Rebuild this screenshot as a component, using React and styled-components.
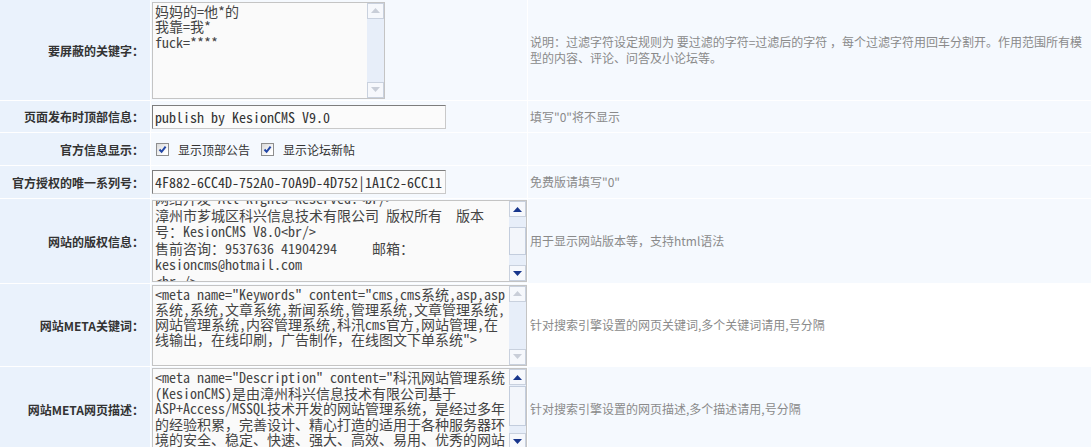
import React, { useLayoutEffect, useRef } from "react";
import styled, { createGlobalStyle } from "styled-components";

const GlobalStyle = createGlobalStyle`
  html, body {
    margin: 0;
    padding: 0;
    background: #fff;
    overflow: hidden;
  }
  body {
    font-family: "Noto Sans CJK SC", "Liberation Sans", sans-serif;
    font-size: 12px;
    color: #333;
  }
`;

const MONO = `"Noto Sans Mono CJK SC", "Noto Sans CJK SC", monospace`;

const Table = styled.div`
  display: grid;
  grid-template-columns: 150px 376px 1fr;
  grid-template-rows: 100px 31px 32px 32px 84px 82px 84px;
  gap: 1px;
  width: 1091px;
  background: #fff;
`;

const Label = styled.div`
  background: #eaf2fc;
  display: flex;
  align-items: center;
  justify-content: flex-end;
  padding-right: 6px;
  font-weight: bold;
  color: #333;
  white-space: nowrap;
`;

const Field = styled.div`
  background: #f5f9fe;
  display: flex;
  align-items: center;
  padding-left: ${(p) => p.$indent || 1}px;
  gap: 9px;
  overflow: hidden;
`;

const Note = styled.div`
  background: ${(p) => (p.$plain ? "#fff" : "#f5f9fe")};
  display: flex;
  align-items: center;
  padding-left: 2px;
  color: #8a8a8a;
  line-height: 16px;
`;

const NoteText = styled.p`
  margin: 0;
`;

const Input = styled.input`
  width: 294px;
  height: 24px;
  box-sizing: border-box;
  margin: 0;
  padding: 0 2px;
  border: 1px solid;
  border-color: #7d7d7d #c9c9c9 #c9c9c9 #7d7d7d;
  background: #fbfbfb;
  font-family: ${MONO};
  font-size: 14px;
  color: #333;
  outline: none;
`;

const Box = styled.div`
  display: flex;
  width: ${(p) => p.$w}px;
  height: ${(p) => p.$h}px;
  box-sizing: border-box;
  border: 1px solid #c4c4c4;
  background: #fafafa;
`;

const Area = styled.textarea`
  flex: 1;
  margin: 0;
  padding: 1px 2px;
  border: none;
  background: transparent;
  resize: none;
  overflow: hidden;
  white-space: pre;
  font-family: ${MONO};
  font-size: 14px;
  line-height: ${(p) => p.$lh}px;
  color: #444;
  outline: none;
`;

const Scrollbar = styled.div`
  width: 17px;
  display: flex;
  flex-direction: column;
  background: #e7eef9;
`;

const ScrollButton = styled.div`
  height: 16px;
  box-sizing: border-box;
  border: 1px solid #c9d1de;
  background: #f6f8fc;
  display: flex;
  align-items: center;
  justify-content: center;
`;

const Track = styled.div`
  flex: ${(p) => p.$grow};
`;

const Thumb = styled.div`
  height: ${(p) => p.$size}px;
  box-sizing: border-box;
  border: 1px solid #c3cddd;
  background: #f3f6fb;
`;

const Check = styled.span`
  width: 13px;
  height: 13px;
  box-sizing: border-box;
  border: 1px solid #8e8e8e;
  background: linear-gradient(135deg, #d9d9d9, #ffffff 80%);
  display: inline-flex;
  align-items: center;
  justify-content: center;
  flex-shrink: 0;
`;

const CheckLabel = styled.span`
  color: #333;
  font-size: 12px;
  margin-right: 2px;
`;

function Arrow({ down, active }) {
  return (
    <svg width="9" height="5" viewBox="0 0 9 5">
      <path
        d={down ? "M0 0 L9 0 L4.5 5 Z" : "M0 5 L4.5 0 L9 5 Z"}
        fill={active ? "#17358c" : "#c9ced8"}
      />
    </svg>
  );
}

function TextBox({ w, h, lh, lines, scroll = 0, active, thumb }) {
  const ref = useRef(null);
  useLayoutEffect(() => {
    if (ref.current) ref.current.scrollTop = scroll;
  }, [scroll]);
  return (
    <Box $w={w} $h={h}>
      <Area ref={ref} $lh={lh} readOnly value={lines.join("\n")} />
      <Scrollbar>
        <ScrollButton>
          <Arrow active={active} />
        </ScrollButton>
        {active ? (
          <>
            <Track $grow={thumb[0]} />
            <Thumb $size={thumb[1]} />
            <Track $grow={thumb[2]} />
          </>
        ) : (
          <Track $grow={1} />
        )}
        <ScrollButton>
          <Arrow down active={active} />
        </ScrollButton>
      </Scrollbar>
    </Box>
  );
}

function CheckBox({ children }) {
  return (
    <>
      <Check>
        <svg width="9" height="9" viewBox="0 0 9 9">
          <path d="M1.5 4.5 L3.6 6.8 L7.6 1.6" fill="none" stroke="#2347a6" strokeWidth="2" />
        </svg>
      </Check>
      <CheckLabel>{children}</CheckLabel>
    </>
  );
}

const keywords = ["妈妈的=他*的", "我靠=我*", "fuck=****"];

const copyright = [
  "Copyright © 2006-2012 www.kesion.com",
  "科兴信息技术有限公司 科汛",
  "网络开发 All Rights Reserved.<br/>",
  "漳州市芗城区科兴信息技术有限公司 版权所有  版本",
  "号：KesionCMS V8.0<br/>",
  "售前咨询：9537636 41904294     邮箱：",
  "kesioncms@hotmail.com",
  "<br />",
];

const metaKeywords = [
  '<meta name="Keywords" content="cms,cms系统,asp,asp',
  "系统,系统,文章系统,新闻系统,管理系统,文章管理系统,",
  "网站管理系统,内容管理系统,科汛cms官方,网站管理,在",
  '线输出，在线印刷，广告制作，在线图文下单系统">',
];

const metaDesc = [
  '<meta name="Description" content="科汛网站管理系统',
  "(KesionCMS)是由漳州科兴信息技术有限公司基于",
  "ASP+Access/MSSQL技术开发的网站管理系统，是经过多年",
  "的经验积累，完善设计、精心打造的适用于各种服务器环",
  "境的安全、稳定、快速、强大、高效、易用、优秀的网站",
  "建设解决方案。\">",
];

export default function App() {
  return (
    <>
      <GlobalStyle />
      <Table>
        <Label>要屏蔽的关键字：</Label>
        <Field>
          <TextBox w={233} h={97} lh={15.5} lines={keywords} />
        </Field>
        <Note>
          <NoteText>
            说明：过滤字符设定规则为 要过滤的字符=过滤后的字符 ，每个过滤字符用回车分割开。作用范围所有模
            <br />
            型的内容、评论、问答及小论坛等。
          </NoteText>
        </Note>

        <Label>页面发布时顶部信息：</Label>
        <Field>
          <Input readOnly value="publish by KesionCMS V9.0" />
        </Field>
        <Note>
          <NoteText>填写"0"将不显示</NoteText>
        </Note>

        <Label>官方信息显示：</Label>
        <Field $indent={5}>
          <CheckBox>显示顶部公告</CheckBox>
          <CheckBox>显示论坛新帖</CheckBox>
        </Field>
        <Note />

        <Label>官方授权的唯一系列号：</Label>
        <Field>
          <Input readOnly value="4F882-6CC4D-752A0-70A9D-4D752|1A1C2-6CC11-4E9A0-52B7F" />
        </Field>
        <Note>
          <NoteText>免费版请填写"0"</NoteText>
        </Note>

        <Label>网站的版权信息：</Label>
        <Field>
          <TextBox
            w={375}
            h={82}
            lh={16.5}
            lines={copyright}
            scroll={45}
            active
            thumb={[1, 28, 1]}
          />
        </Field>
        <Note>
          <NoteText>用于显示网站版本等，支持html语法</NoteText>
        </Note>

        <Label>网站META关键词：</Label>
        <Field>
          <TextBox w={375} h={81} lh={15} lines={metaKeywords} />
        </Field>
        <Note $plain>
          <NoteText>针对搜索引擎设置的网页关键词,多个关键词请用,号分隔</NoteText>
        </Note>

        <Label>网站META网页描述：</Label>
        <Field>
          <TextBox
            w={375}
            h={82}
            lh={15.5}
            lines={metaDesc}
            active
            thumb={[0.1, 40, 1]}
          />
        </Field>
        <Note>
          <NoteText>针对搜索引擎设置的网页描述,多个描述请用,号分隔</NoteText>
        </Note>
      </Table>
    </>
  );
}
